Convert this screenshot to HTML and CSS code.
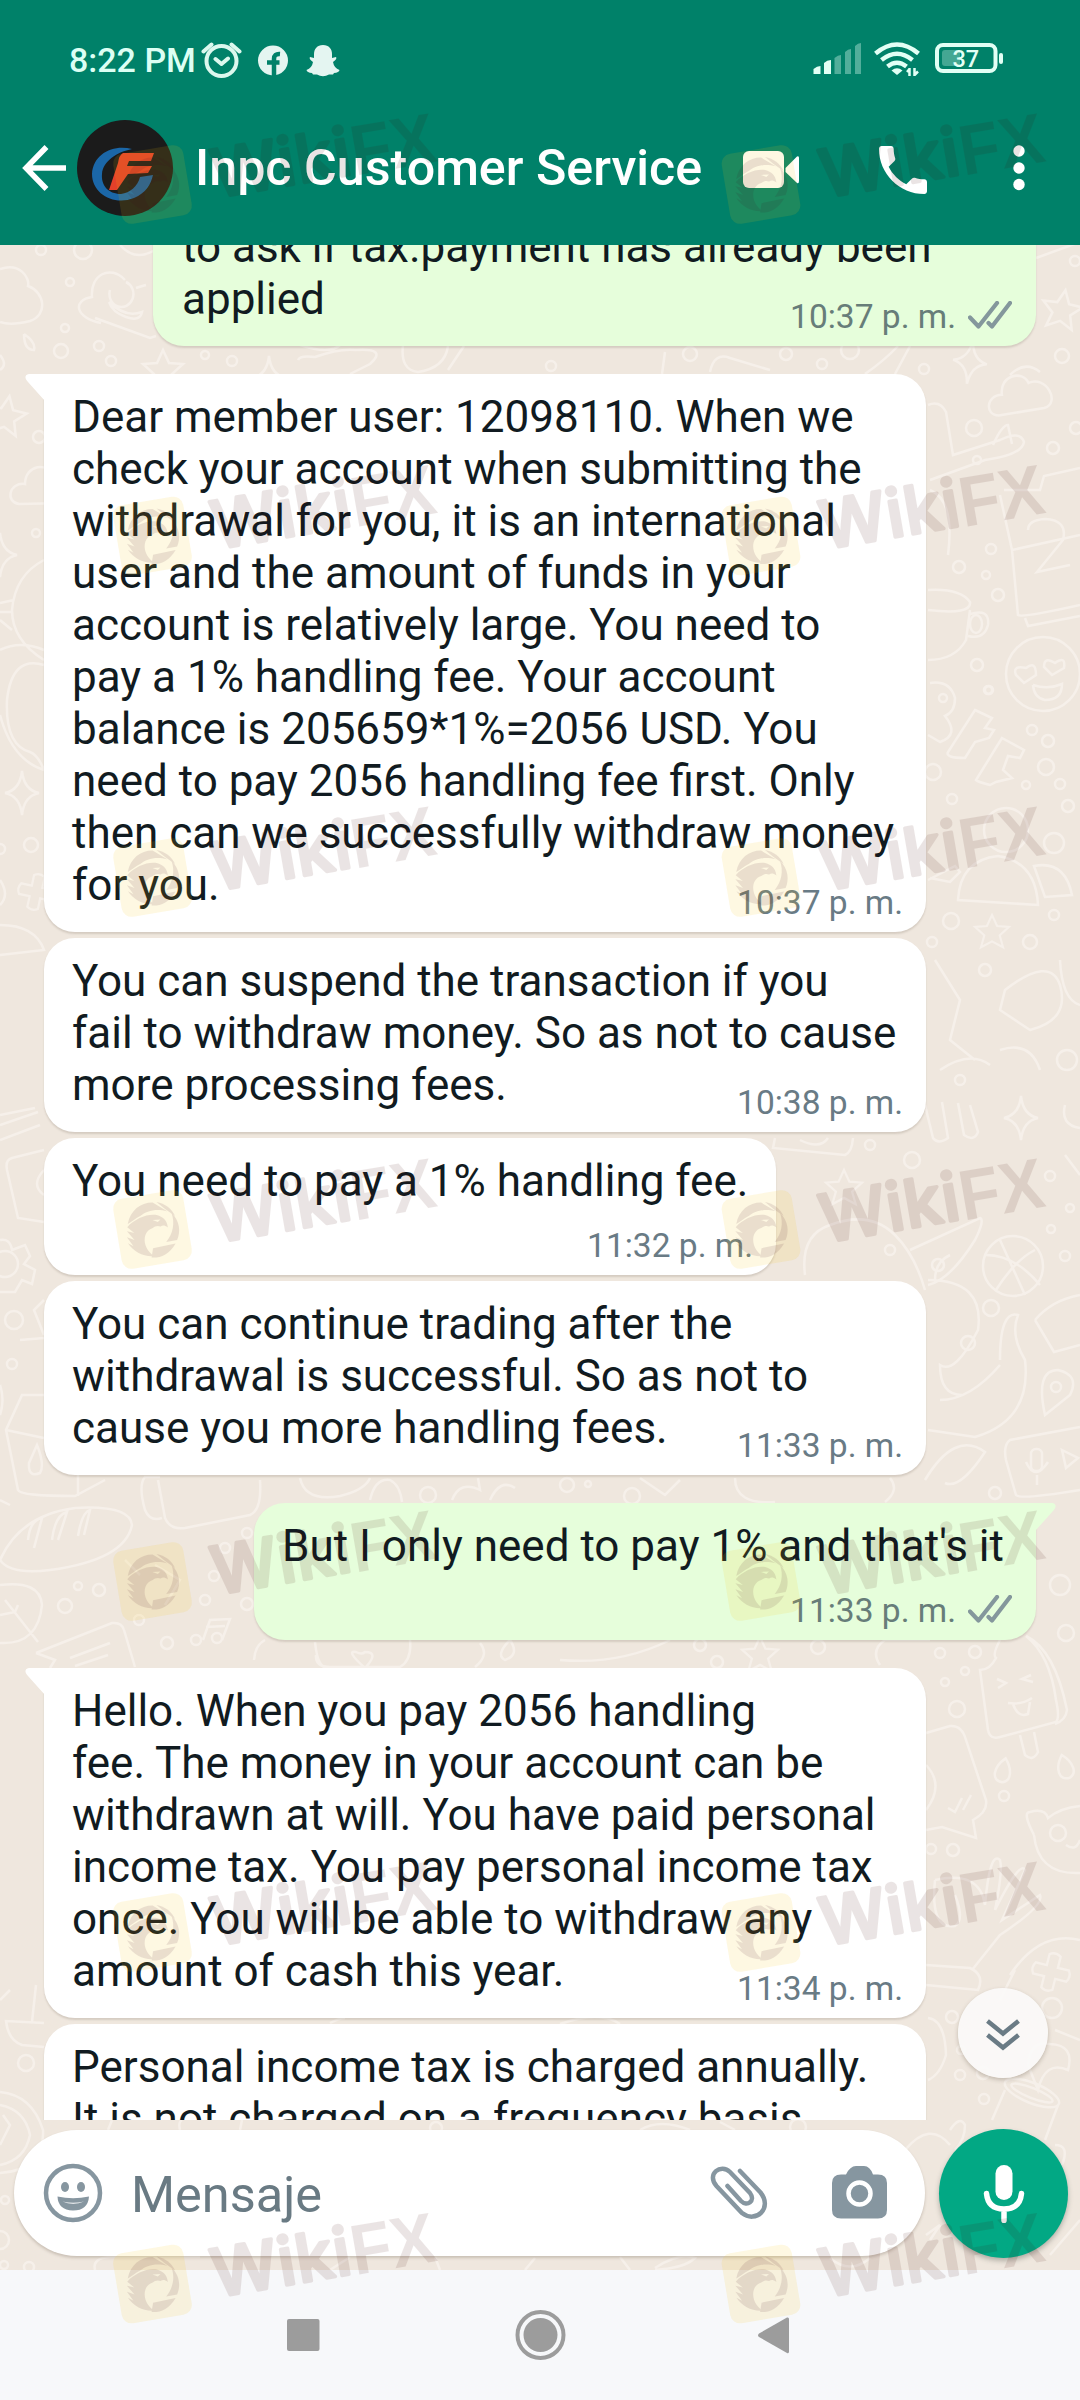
FILE: index.html
```html
<!DOCTYPE html>
<html lang="es">
<head>
<meta charset="utf-8">
<title>Inpc Customer Service</title>
<link rel="stylesheet" href="styles.css">
</head>
<body>
<svg class="defs" width="0" height="0" aria-hidden="true">
  <defs>
    <symbol id="ticks" viewBox="0 0 44 28"><path d="M2 16.500 10.500 25.500 29 2M20.500 22 24 25.500 42 2" fill="none" stroke="#84979c" stroke-width="4.200" stroke-linecap="round" stroke-linejoin="round"/></symbol>
    <symbol id="tail" viewBox="0 0 20 28"><path d="M20 0H4Q0 .5.500 4 1 6 3 8L20 27Z"/></symbol>
    <g id="star"><path d="M0-20 6-7 20-6 9 4 13 18 0 11-13 18-9 4-20-6-6-7Z"/></g>
    <g id="spark"><path d="M0-22Q2-3 17 0 2 3 0 22-2 3-17 0-2-3 0-22Z"/></g>
    <g id="cloud"><path d="M-26 18C-40 16-36-4-20-2-20-22 4-24 8-10 26-16 38 14 20 17Z"/></g>
    <g id="drop"><path d="M2-12C10-2 11 10 2 12-10 12-9-2 2-12Z"/></g>
    <g id="plus"><path d="M-6-18Q0-22 6-18V-6H18Q22 0 18 6H6V18Q0 22-6 18V6H-18Q-22 0-18-6H-6Z"/></g>
    <g id="wm">
      <g transform="rotate(-9.500 40.500 40.500)">
        <rect x="5" y="5" width="71" height="71" rx="10" fill="rgb(250,195,20)" opacity=".12"/>
        <g opacity=".1" fill="rgb(65,5,30)">
          <path d="M17 31C22 18 33 12 45 14L58 25C48 20 37 21 31 25 25 27 20 30 17 31Z"/>
          <path d="M49 14C57 17 63 23 65 31L56 22Z"/>
          <path d="M62 27C69 37 68 47 63 55H52C60 48 64 38 62 27Z"/>
          <path d="M61 58C53 68 43 70 35 68L38 59Z"/>
          <path d="M16 34C25 27 38 24 47 27 53 30 56 33 56 41 53 38 51 38 49 39 46 37 43 38 41 39 33 40 30 48 31 55 32 61 35 64 37 67 27 66 18 59 14 50L19 54 14 44 21 48 15 38 22 41ZM42 31 47 34 50 32Z" fill-rule="evenodd"/>
        </g>
      </g>
      <g transform="translate(102 56) rotate(-9.800)" opacity=".1" fill="rgb(65,5,0)" stroke="rgb(65,5,0)">
        <text class="wm-round" x="2" y="-2" textLength="140" stroke-width="3.500" stroke-linejoin="round">Wiki</text>
        <text class="wm-sharp" x="143" y="0" textLength="85" lengthAdjust="spacingAndGlyphs" stroke="none">FX</text>
      </g>
    </g>
  </defs>
</svg>

<div class="phone">
  <header class="top">
    <div class="status">
      <span class="clock">8:22 PM</span>
      <svg class="status-left" width="140" height="40" viewBox="201 39 140 40" fill="none" stroke="#dcf8ee" stroke-width="4">
        <circle cx="221.500" cy="60" r="15"/><path d="M215.500 58 221.500 63 228 57.500M203.500 50.500 211.500 43.500M231.500 43.500 239.500 50.500" stroke-linecap="round" stroke-linejoin="round"/>
        <circle cx="273" cy="59.500" r="15" fill="#e4f5f1" stroke="none"/>
        <path d="M274 76V60M267 61.500H279.500M274 64V58Q274 52.500 280 53" stroke="#008169" stroke-width="4.500"/>
        <path d="M323 44C329 44 332 48 332 53V57L336 56Q337.500 58 333 61 334 67 339.500 69 339 71.500 334 72L333 73.500H329Q323 77 317 73.500H313L312 72Q307 71.500 306.500 69 312 67 313 61 308.500 58 310 56L314 57V53C314 48 317 44 323 44Z" fill="#e4f5f1" stroke="none"/>
      </svg>
      <svg class="status-right" width="192" height="40" viewBox="812 41 192 40">
        <g fill="#e2fff5"><path d="M813.500 75V70Q817 67 820.500 67V75ZM824 75V64Q827 61 831 61V75Z"/><path opacity=".36" d="M834.500 75V59Q838 56 841 56V75ZM845 75V53Q848 50 851 50V75ZM855 75V47Q858 44 861 44V75Z"/></g>
        <g fill="none" stroke="#e2fff5" stroke-width="4.500"><path d="M875.500 54.500Q897 36.500 918.500 54.500M881.500 61Q897 48.500 912.500 61M887.500 67.500Q897 60 906.500 67.500"/><path d="M909.500 77V69M907 73 909.500 70M914.500 69V77M914.500 76 918 72.500" stroke-width="2.500"/></g>
        <path d="M891.500 71.500Q897 67 902.500 71.500L897 76Z" fill="#e2fff5"/>
        <rect x="937" y="46" width="58.500" height="26" rx="6" fill="none" stroke="#e2fff5" stroke-width="4"/><rect x="942" y="51" width="18" height="16" rx="3" fill="#e2fff5" opacity=".3"/><rect x="999" y="54" width="4" height="11" rx="2" fill="#e2fff5"/>
        <text class="battery-text" x="952.500" y="68">37</text>
      </svg>
    </div>
    <div class="appbar">
      <svg class="back" width="46" height="46" viewBox="0 0 46 46" fill="none" stroke="#fff" stroke-width="5.500"><path d="M44 23H4M24.500 2 4 23 24.500 44"/></svg>
      <svg class="avatar" width="96" height="96" viewBox="0 0 96 96"><circle cx="48" cy="48" r="48" fill="#1b1b1b"/>
        <path d="M55 29C36 24 16 34 15 54 15 74 37 86 57 78 69 73 74 64 76 55L63 57C61 66 53 73 44 74 31 74 24 65 25 54 26 41 40 32 55 29Z" fill="#1b67a8"/>
        <path d="M46 33H77L74 41H52L50 46H75L71 53 51 54 40 70H32L41 43Q42 35 46 33Z" fill="#e2402a"/></svg>
      <h1 class="title">Inpc Customer Service</h1>
      <svg class="video" width="56" height="38" viewBox="0 0 56 38" fill="#fff"><rect width="41" height="37" rx="6"/><path d="M42.500 17 54 5.500Q56 4.500 56 7V30Q56 33 54 32L42.500 21Z"/></svg>
      <svg class="phone-icon" width="48" height="48" viewBox="3 3 18 18" fill="#fff"><path d="M6.620 10.790c1.440 2.830 3.760 5.140 6.590 6.590l2.200-2.200c.27-.27.67-.36 1.020-.24 1.120.37 2.330.57 3.570.57.55 0 1 .45 1 1V20c0 .55-.45 1-1 1-9.390 0-17-7.610-17-17 0-.55.45-1 1-1h3.500c.55 0 1 .45 1 1 0 1.250.2 2.450.57 3.570.11.35.03.74-.25 1.020l-2.200 2.200z"/></svg>
      <svg class="more" width="12" height="46" viewBox="0 0 12 46" fill="#fff"><circle cx="6" cy="6" r="5.700"/><circle cx="6" cy="23" r="5.700"/><circle cx="6" cy="39.500" r="5.700"/></svg>
    </div>
  </header>

  <main class="conversation">
    <svg class="wallpaper" width="1080" height="2025" viewBox="0 245 1080 2025" fill="none" stroke="#f6f0ea" stroke-width="2.500">
      <path d="M0 269C20 262 30 278 28 286 45 292 48 315 30 321 18 324 8 325 0 322M101 323C75 318 72 300 92 297 90 275 110 264 125 280M110 290a12 13 0 1 0 16-8M109 302Q125 318 142 312 140 322 126 317 112 312 109 302M95 318 150 338 156 336M120 245Q135 262 155 250M136 288Q142 286 146 285"/>
      <circle cx="83" cy="250" r="9"/><circle cx="41" cy="250" r="5"/><circle cx="70" cy="282" r="4"/><circle cx="65" cy="328" r="4"/><circle cx="61" cy="351" r="7"/><circle cx="99" cy="346" r="5"/><circle cx="111" cy="361" r="5"/><circle cx="205" cy="355" r="4"/><circle cx="232" cy="361" r="5"/>
      <path d="M24 334Q36 342 34 350 24 350 24 334M0 355Q8 365 0 370M298 360Q300 355 315 357 340 348 356 350 388 348 370 364L350 374M403 345Q400 370 418 372 445 368 448 346M300 345Q330 355 340 345M464 346 448 370M710 372Q714 352 730 358L770 370M665 352 662 374M898 346Q885 360 865 374M910 346 895 374"/>
      <circle cx="690" cy="354" r="7"/><circle cx="786" cy="354" r="6"/><circle cx="850" cy="350" r="9"/><circle cx="822" cy="364" r="5"/><circle cx="924" cy="369" r="5"/><circle cx="1062" cy="356" r="7"/><circle cx="551" cy="366" r="5"/><circle cx="1075" cy="261" r="5"/>
      <use href="#star" transform="translate(163 370)"/><use href="#star" transform="translate(1062 310) rotate(10)"/><use href="#spark" transform="translate(970 362) rotate(8)"/><use href="#spark" transform="translate(269 378)"/>
      <path d="M1036 258 1080 242M1010 375Q1025 360 1040 372"/>
      <use href="#star" transform="translate(6 416) rotate(10)"/><use href="#cloud" transform="translate(45 486)"/><use href="#spark" transform="translate(0 555)"/><use href="#spark" transform="translate(22 793)"/><use href="#plus" transform="translate(36 892) scale(.9) rotate(12)"/>
      <circle cx="39" cy="437" r="6"/><circle cx="36" cy="533" r="4"/><circle cx="31" cy="845" r="7"/><circle cx="0" cy="849" r="5"/>
      <path d="M44 560Q15 575 12 610 12 640 44 660M0 603 14 600M0 620 12 630M12 612H0M0 650Q20 640 44 650M44 665Q12 655 7 700 5 745 30 752 38 755 44 770M0 715Q12 760 44 770M0 925Q35 925 44 950L0 955M0 880Q10 895 0 905"/>
      <use href="#cloud" transform="translate(1022 394) rotate(-8)"/>
      <path d="M928 405Q940 400 946 412L953 455 1000 440Q1020 430 1024 442 1022 455 985 460L930 480M993 445Q1002 425 1008 425L1012 444M930 490Q955 500 948 555M1004 490H1040L1044 476 1080 468M1000 495 1012 550 1018 615Q1022 618 1080 605M1025 618 1028 626 1080 616M1012 550 1080 535M1028 530Q1028 520 1045 519 1068 520 1063 540L1037 572 1070 565M928 590Q960 588 970 602 972 615 928 610M970 610 966 640Q955 660 928 660M970 614Q990 608 988 625 984 640 968 636"/>
      <ellipse cx="976" cy="624" rx="6" ry="9"/>
      <circle cx="974" cy="428" r="8"/><circle cx="1053" cy="448" r="6"/><circle cx="977" cy="460" r="4"/><circle cx="991" cy="549" r="5"/><circle cx="959" cy="567" r="6"/><circle cx="986" cy="575" r="4"/><circle cx="998" cy="595" r="6"/><circle cx="977" cy="665" r="6"/><circle cx="988" cy="690" r="4"/><circle cx="1076" cy="428" r="6"/>
      <circle cx="1043" cy="674" r="37"/><path d="M1016 675Q1012 665 1026 668 1036 660 1036 675L1024 683ZM1044 667Q1044 656 1055 663 1066 655 1064 668L1052 675ZM1033 685Q1048 690 1062 684 1062 700 1045 700 1034 698 1033 685M930 683Q950 680 955 698 955 712 945 716 960 735 940 742L928 735M975 710 992 718 985 728 994 730 989 738 975 742 965 758Q945 758 948 752ZM1002 738 1024 750 1020 758 1008 756 1003 770 1012 778 996 782 990 785Q978 782 976 780Z"/>
      <circle cx="943" cy="698" r="4"/><circle cx="989" cy="690" r="4"/><circle cx="1032" cy="730" r="5"/><circle cx="1048" cy="741" r="6"/><circle cx="1046" cy="767" r="8"/><circle cx="933" cy="772" r="8"/><circle cx="1026" cy="785" r="4"/><circle cx="1060" cy="784" r="5"/><circle cx="952" cy="799" r="5"/><circle cx="1068" cy="806" r="6"/><circle cx="1054" cy="843" r="10"/><circle cx="1006" cy="830" r="22"/><circle cx="951" cy="921" r="8"/><circle cx="1054" cy="915" r="5"/><circle cx="1030" cy="942" r="7"/><circle cx="932" cy="942" r="5"/>
      <path d="M958 900Q960 860 998 856 1036 862 1038 905ZM1034 866Q1065 860 1072 895L1045 897ZM928 880 955 866 960 872 950 882 930 878"/>
      <use href="#star" transform="translate(992 932) scale(.85)"/>
      <path d="M1060 960Q1062 1000 1080 1005M1005 990Q1050 955 1060 985 1070 1020 1030 1030L1000 1010ZM935 960 960 1000 950 1040 975 1060M940 1070Q970 1050 990 1065M1000 1050Q1030 1040 1040 1070M925 1105 933 1138Q938 1145 948 1138L942 1102M958 1103 964 1135Q974 1142 978 1132L970 1105"/>
      <circle cx="1067" cy="1060" r="10"/><circle cx="985" cy="970" r="6"/><circle cx="960" cy="1080" r="5"/>
      <use href="#spark" transform="translate(1021 1118)"/>
      <path d="M775 1138 773 1148 845 1155Q852 1152 853 1138M800 1140Q820 1150 828 1138M1065 1105Q1060 1125 1080 1128M805 1275Q800 1235 830 1225 870 1210 895 1235 915 1255 925 1290M910 1250 980 1218Q985 1220 975 1240 950 1280 928 1285M928 1280Q985 1280 978 1330 955 1375 940 1365 940 1395 962 1395M1000 1360Q1000 1310 1018 1315 1010 1335 1025 1360 1032 1420 975 1437L928 1430M940 1400Q970 1400 1000 1365M950 1255Q935 1262 935 1280M1035 1320Q1052 1300 1080 1295M1035 1320 1054 1352 1080 1345M1045 1415Q1035 1370 1058 1370 1080 1375 1070 1395ZM1080 1427 1010 1440Q1003 1445 1006 1460L1016 1495Q1020 1500 1080 1490M1062 1450 1078 1458 1066 1468ZM925 1480Q955 1430 985 1452 960 1490 945 1483M1065 1155 1080 1175"/>
      <circle cx="1013" cy="1266" r="30"/><path d="M986 1255Q1015 1255 1040 1285M1000 1240 1025 1295M1035 1250Q1015 1260 996 1290"/><circle cx="1056" cy="1387" r="5"/>
      <circle cx="870" cy="1145" r="5"/><circle cx="912" cy="1160" r="8"/><circle cx="1050" cy="1176" r="5"/><circle cx="1070" cy="1208" r="4"/><circle cx="1051" cy="1229" r="4"/><circle cx="1065" cy="1256" r="5"/><circle cx="890" cy="1250" r="5"/><circle cx="991" cy="1308" r="8"/><circle cx="938" cy="1265" r="6"/><circle cx="968" cy="1343" r="7"/><circle cx="995" cy="1493" r="6"/><circle cx="567" cy="1485" r="7"/><circle cx="632" cy="1496" r="8"/><circle cx="588" cy="1484" r="3"/>
      <rect x="1031" y="1449" width="11" height="22" rx="5"/><path d="M1026 1462Q1035 1482 1048 1462M1037 1475V1485"/><use href="#star" transform="translate(844 1188) scale(.9)"/>
      <path d="M0 1115 35 1108M0 1125 38 1112M0 1140 40 1125M44 1150 12 1158Q5 1160 7 1170L18 1218 44 1222M44 1170Q30 1185 44 1195M0 1240Q10 1238 12 1250L25 1245 30 1256 24 1264 35 1270 32 1284 22 1280 15 1292H0"/><circle cx="5" cy="1264" r="13"/><circle cx="14" cy="1320" r="9"/><circle cx="12" cy="1364" r="5"/>
      <path d="M44 1300 34 1310 44 1335M20 1340 44 1338M0 1385Q5 1400 0 1415M44 1395H22L6 1430 18 1490Q20 1496 75 1496L105 1480M6 1430 44 1438M78 1435V1496M37 1445Q45 1465 40 1473 28 1478 29 1463ZM0 1500 10 1505"/>
      <path d="M160 1477H145Q138 1485 145 1510 150 1522 162 1518M158 1480 165 1518Q170 1530 185 1528L250 1515Q262 1510 260 1480M300 1478Q305 1502 340 1496 365 1490 370 1478M370 1500Q375 1478 390 1480 400 1485 402 1502M452 1500Q460 1480 480 1490L478 1478M490 1500Q500 1478 515 1488M640 1478 665 1495 680 1480M735 1478Q735 1505 775 1502M890 1478Q900 1490 885 1502M0 1560Q20 1515 75 1508 130 1505 132 1525 125 1560 50 1570 10 1575 0 1560M28 1540Q30 1520 42 1518L34 1548M52 1540Q55 1515 67 1512L58 1540M78 1536Q82 1512 90 1510L84 1535"/>
      <path d="M0 1585Q40 1580 42 1605 38 1645 0 1643M5 1600 38 1642M15 1612 18 1605M15 1612 0 1615M36 1653 112 1623Q122 1622 124 1630L135 1667M36 1653 55 1660 50 1668M70 1658 110 1643M75 1666 108 1655M203 1640 210 1620 230 1619 222 1640M206 1627 225 1626M254 1660Q255 1645 265 1640M315 1642Q318 1672 330 1667M316 1655Q315 1667 330 1667H400Q412 1660 410 1640M365 1668Q345 1650 356 1652 362 1655 365 1652 380 1652 365 1668M480 1643Q490 1655 475 1667M510 1640Q495 1655 505 1660 520 1655 510 1640"/>
      <circle cx="196" cy="1640" r="5"/><circle cx="217" cy="1638" r="5"/><circle cx="428" cy="1495" r="8"/><circle cx="78" cy="1586" r="4"/><circle cx="99" cy="1590" r="6"/><circle cx="65" cy="1606" r="7"/><circle cx="139" cy="1620" r="5"/><circle cx="205" cy="1600" r="5"/><circle cx="247" cy="1533" r="5"/><circle cx="214" cy="1576" r="5"/><circle cx="225" cy="1548" r="5"/><circle cx="247" cy="1604" r="6"/><circle cx="167" cy="1643" r="6"/><path d="M155 1565 180 1580 165 1605M125 1560 140 1575"/>
      <path d="M560 1660Q620 1665 670 1640"/><circle cx="700" cy="1645" r="6"/><circle cx="818" cy="1647" r="7"/><circle cx="717" cy="1662" r="6"/><use href="#star" transform="translate(760 1655) scale(.9)"/>
      <path d="M880 1665Q870 1650 885 1640H930M1000 1640Q992 1655 996 1658 990 1670 980 1670L988 1730Q990 1740 1000 1737L1056 1722Q1060 1718 1056 1700 1050 1655 1026 1636 1055 1650 1067 1710 1066 1720 1055 1724M1020 1735 1025 1755Q1033 1762 1038 1752L1034 1732M997 1679 1006 1683 998 1688M1031 1675 1022 1679 1033 1682M1008 1703Q1022 1705 1032 1698M1013 1704Q1018 1718 1028 1714L1030 1702"/>
      <circle cx="940" cy="1653" r="5"/><circle cx="975" cy="1652" r="6"/><circle cx="965" cy="1671" r="4"/><circle cx="945" cy="1682" r="4"/><circle cx="957" cy="1709" r="8"/><circle cx="1066" cy="1633" r="8"/><circle cx="1060" cy="1585" r="10"/><circle cx="1004" cy="1796" r="5"/><circle cx="931" cy="1849" r="5"/><circle cx="953" cy="1850" r="6"/><circle cx="1058" cy="1833" r="8"/><circle cx="1052" cy="2008" r="10"/><circle cx="952" cy="2017" r="6"/><circle cx="961" cy="2050" r="4"/><circle cx="960" cy="2075" r="5"/><circle cx="983" cy="2073" r="6"/><circle cx="984" cy="2099" r="5"/>
      <path d="M926 1733 950 1726Q962 1725 966 1740L986 1800Q988 1812 973 1820L976 1838 942 1827 926 1830M926 1765Q945 1785 926 1810M948 1808 955 1812 962 1798M963 1810 971 1795"/><use href="#drop" transform="translate(1002 1770) rotate(8)"/><use href="#drop" transform="translate(1064 1767) rotate(-20)"/>
      <path d="M1034 1835Q1022 1812 1030 1812 1045 1808 1048 1818 1060 1808 1080 1806M1034 1835Q1038 1875 1080 1873M1066 1845Q1076 1852 1080 1840M935 1880Q980 1870 985 1905M935 1880Q930 1930 955 1926 965 1920 955 1895M985 1905Q990 1850 1000 1860 1003 1870 995 1910M995 1910Q1020 1860 1025 1870L1002 1920 1040 1895Q1045 1905 1000 1935L972 1970M926 1965 970 1968Q985 1975 978 1990L926 1985M1010 1975Q1040 1930 1080 1940M1000 2000 1015 1970M1028 2065Q1030 2040 1050 2044 1075 2045 1068 2070 1045 2060 1038 2090ZM928 2018Q945 2020 946 2055 940 2075 928 2080M1055 2030 1080 2040"/>
      <use href="#plus" transform="translate(1051 1972) rotate(14) scale(.95)"/>
      <g transform="rotate(22 1032 2093)"><ellipse cx="1032" cy="2093" rx="29" ry="10"/><ellipse cx="1032" cy="2093" rx="22" ry="5"/></g>
      <path d="M1005 2090 992 2120M1058 2105 1045 2140M905 2150Q930 2120 950 2145M950 2130Q960 2115 965 2125 965 2140 955 2150M1055 2145Q1070 2145 1062 2165M1050 2255 1080 2220M926 2235 940 2225 930 2240"/>
      <path d="M0 2000 10 1990M36 1985 32 2022M44 2023 6 2021Q8 2040 22 2045L44 2047M0 2092Q32 2095 43 2130 45 2170 0 2173M0 2105Q25 2110 30 2135 25 2160 0 2165M3 2115 10 2125 0 2145"/><circle cx="26" cy="2063" r="8"/><circle cx="5" cy="2200" r="4"/><circle cx="0" cy="2240" r="9"/><circle cx="29" cy="2267" r="5"/><circle cx="4" cy="2265" r="4"/><circle cx="436" cy="2128" r="6"/><circle cx="798" cy="2127" r="8"/>
      <path d="M108 2130 112 2120M180 2130Q178 2122 182 2120M240 2130 242 2120M640 2130Q660 2118 690 2130M720 2122 735 2130M95 2270Q92 2258 110 2257H200M330 2270 350 2257M435 2257 440 2270M525 2270 535 2258M620 2257 630 2270M655 2268Q680 2252 695 2258 685 2268 655 2270M830 2258Q850 2275 870 2258M330 2023Q340 2018 345 2018M560 2024Q600 2010 620 2024"/>
    </svg>

    <div class="messages">
      <div class="msg out first">
        <p>to ask if tax.payment has already been<br>applied</p>
        <span class="meta">10:37 p. m.<svg width="44" height="28"><use href="#ticks"/></svg></span>
      </div>
      <div class="msg in lead">
        <svg class="tail" width="20" height="28" fill="#fff"><use href="#tail"/></svg>
        <p>Dear member user: 12098110. When we<br>check your account when submitting the<br>withdrawal for you, it is an international<br>user and the amount of funds in your<br>account is relatively large. You need to<br>pay a 1% handling fee. Your account<br>balance is 205659*1%=2056 USD. You<br>need to pay 2056 handling fee first. Only<br>then can we successfully withdraw money<br>for you.</p>
        <span class="meta">10:37 p. m.</span>
      </div>
      <div class="msg in">
        <p>You can suspend the transaction if you<br>fail to withdraw money. So as not to cause<br>more processing fees.</p>
        <span class="meta">10:38 p. m.</span>
      </div>
      <div class="msg in stacked narrow">
        <p>You need to pay a 1% handling fee.</p>
        <span class="meta">11:32 p. m.</span>
      </div>
      <div class="msg in">
        <p>You can continue trading after the<br>withdrawal is successful. So as not to<br>cause you more handling fees.</p>
        <span class="meta">11:33 p. m.</span>
      </div>
      <div class="msg out lead stacked reply">
        <svg class="tail" width="20" height="28" fill="#e6fedb"><use href="#tail"/></svg>
        <p>But I only need to pay 1% and that's it</p>
        <span class="meta">11:33 p. m.<svg width="44" height="28"><use href="#ticks"/></svg></span>
      </div>
      <div class="msg in lead">
        <svg class="tail" width="20" height="28" fill="#fff"><use href="#tail"/></svg>
        <p>Hello. When you pay 2056 handling<br>fee. The money in your account can be<br>withdrawn at will. You have paid personal<br>income tax. You pay personal income tax<br>once. You will be able to withdraw any<br>amount of cash this year.</p>
        <span class="meta">11:34 p. m.</span>
      </div>
      <div class="msg in">
        <p>Personal income tax is charged annually.<br>It is not charged on a frequency basis.</p>
      </div>
      <button class="jump" aria-label="Ir al final"><svg width="34" height="32" viewBox="0 0 34 32" fill="none" stroke="#6a7b85" stroke-width="4.500"><path d="M1.500 2 17 14.500 32.500 2M1.500 16 17 28.500 32.500 16"/></svg></button>
    </div>

    <div class="composer">
      <div class="field">
        <svg class="smile" width="60" height="60" viewBox="0 0 60 60" fill="#8696a0"><circle cx="30" cy="30" r="27" fill="none" stroke="#8696a0" stroke-width="4.500"/><ellipse cx="22" cy="24" rx="4" ry="5"/><ellipse cx="38" cy="24" rx="4" ry="5"/><path fill-rule="evenodd" d="M14.500 33.500Q30 37 46 33.500 45 47.500 30 47.500 15 47 14.500 33.500ZM19.500 38.500Q30 43 41 38.500 30 41 19.500 38.500Z"/></svg>
        <span class="placeholder">Mensaje</span>
        <svg class="clip" width="58" height="54" viewBox="0 0 58 54" fill="none" stroke="#8696a0" stroke-width="4.500" stroke-linecap="round"><path d="M30 5 50.500 26.500C63 42 46 58 32 47L6.500 20C-4 8 11-3 20 6L40 27C46 35 37 41 31 35L17.500 20"/></svg>
        <svg class="camera" width="56" height="53" viewBox="0 0 56 53"><path d="M9 8.500H14Q18 0 24 0H32Q38 0 41 8.500H46Q55 8.500 55 17V44Q55 52.500 46 52.500H9Q0 52.500 0 44V17Q0 8.500 9 8.500Z" fill="#8696a0"/><circle cx="27.500" cy="27.500" r="11" fill="none" stroke="#fff" stroke-width="4.500"/></svg>
      </div>
      <button class="mic" aria-label="Grabar"><svg width="42" height="58" viewBox="0 0 42 58" fill="none" stroke="#fff" stroke-width="5.500" stroke-linecap="round"><rect x="12.500" y="0" width="17" height="35" rx="8.500" fill="#fff" stroke="none"/><path d="M3.500 28.500Q5 44 21 44 37 44 38.500 28.500M21 44V55.500"/></svg></button>
    </div>
  </main>

  <nav class="nav">
    <svg width="502" height="54" viewBox="287 2308 502 54" fill="#9c9c9c"><rect x="287" y="2319" width="32.500" height="32" rx="2"/><circle cx="540.500" cy="2335" r="17"/><circle cx="540.500" cy="2335" r="23" fill="none" stroke="#9c9c9c" stroke-width="4"/><path d="M759 2333.500 787 2317.500Q789 2317 789 2319V2351.500Q789 2354 787 2353L759 2337Q757 2335.500 759 2333.500Z"/></svg>
  </nav>

  <svg class="watermarks" width="1080" height="2400" viewBox="0 0 1080 2400" aria-hidden="true">
    <g id="column"><use href="#wm" x="112" y="144"/><use href="#wm" x="112" y="495.500"/><use href="#wm" x="112" y="837"/><use href="#wm" x="112" y="1189"/><use href="#wm" x="112" y="1541"/><use href="#wm" x="112" y="1892"/><use href="#wm" x="112" y="2243.500"/></g>
    <use href="#column" x="608.500"/>
  </svg>
</div>
</body>
</html>
```
FILE: styles.css
```css
* { box-sizing: border-box; }
body { margin: 0; font-family: Roboto, "Liberation Sans", sans-serif; }
p, h1 { margin: 0; font-weight: 400; }
button { border: 0; padding: 0; }
svg { display: block; flex: none; }
.defs { position: absolute; }

.phone { position: relative; display: flex; flex-direction: column; width: 1080px; height: 2400px; overflow: hidden; background: #efe7de; }

.top { height: 245px; background: #008169; color: #fff; }
.status { display: flex; align-items: center; height: 91px; padding: 28px 76px 0 69px; }
.clock { width: 132px; color: #dcfff4; font-size: 34px; font-weight: 500; white-space: nowrap; }
.status-right { margin-left: auto; }
.battery-text { fill: #e2fff5; font-size: 23.500px; font-weight: 500; }
.appbar { display: flex; align-items: center; height: 154px; padding-left: 22px; }
.avatar { margin-left: 9px; }
.title { width: 548px; margin-left: 22px; font-size: 50.200px; font-weight: 500; line-height: 66px; white-space: nowrap; }
.video { margin-top: 3px; }
.phone-icon { margin: 4px 0 0 80px; }
.more { margin-left: 86px; }

.conversation { position: relative; flex: none; height: 2025px; }
.wallpaper { position: absolute; inset: 0; }
.messages { position: relative; display: flex; flex-direction: column; align-items: flex-start; gap: 6px; height: 1875px; padding: 0 44px; overflow: hidden; }
.msg { position: relative; display: grid; flex: none; width: 882px; padding: 17px 23px 21px 28px; border-radius: 31px; background: #fff; box-shadow: 0 2px 2px rgba(110, 95, 80, .2); }
.msg p { grid-area: 1 / 1; color: #111b21; font-size: 44px; line-height: 52px; white-space: nowrap; }
.msg.out { align-self: flex-end; width: 883px; padding-right: 24px; background: #e6fedb; }
.msg.first { margin-top: -41px; padding-left: 29px; }
.msg.lead { margin-top: 22px; }
.msg.in.lead { border-top-left-radius: 0; }
.msg.out.lead { border-top-right-radius: 0; }
.msg.stacked { min-height: 137px; }
.msg.narrow { width: 732px; }
.msg.reply { width: 782px; }
.meta { grid-area: 1 / 1; display: flex; gap: 12px; align-self: end; justify-self: end; margin-bottom: -12px; color: #697b85; font-size: 33.500px; line-height: 40px; white-space: nowrap; }
.out .meta { color: #677d79; }
.meta svg { margin-top: 4px; }
.tail { position: absolute; top: 0; left: -19.500px; }
.out .tail { right: -19.500px; left: auto; transform: scaleX(-1); }
.jump { position: absolute; top: 1743px; left: 958px; display: flex; align-items: center; justify-content: center; width: 90px; height: 90px; padding-top: 4px; border-radius: 50%; background: rgba(250, 249, 248, .96); box-shadow: 0 2px 4px rgba(90, 75, 60, .3); }

.composer { position: relative; display: flex; gap: 14px; height: 150px; padding: 9px 12px 0 14px; }
.field { display: flex; align-items: center; width: 911px; height: 126px; margin-top: 1px; padding: 0 37px 0 29px; border-radius: 63px; background: #fff; box-shadow: 0 2px 3px rgba(90, 75, 60, .25); }
.placeholder { margin: 3px 0 0 28px; color: #697a83; font-size: 50.500px; line-height: 60px; }
.clip { margin-left: auto; }
.camera { margin: -2px 0 0 64px; }
.mic { display: flex; align-items: center; justify-content: center; width: 129px; height: 129px; border-radius: 50%; background: #02a884; box-shadow: 0 3px 5px rgba(60, 70, 60, .35); }

.nav { display: flex; justify-content: center; height: 130px; padding: 38px 4px 0 0; background: #f7f8fa; }
.watermarks { position: absolute; inset: 0; pointer-events: none; }
.wm-round { font: 500 66px Inter, sans-serif; }
.wm-sharp { font: 700 71px "Liberation Sans", sans-serif; }
```
